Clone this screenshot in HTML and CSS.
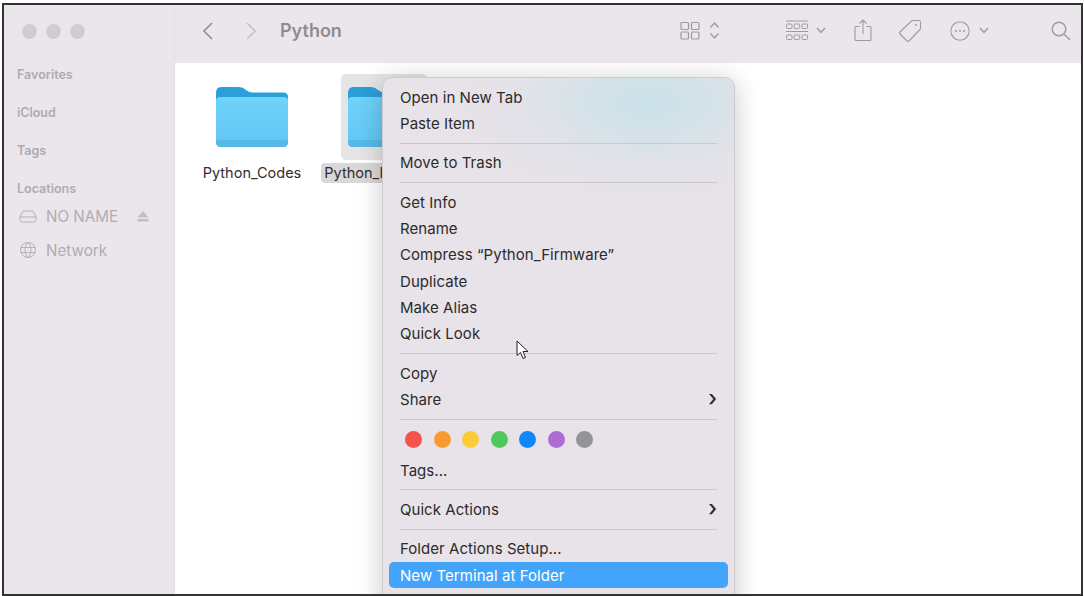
FILE: index.html
```html
<!DOCTYPE html>
<html lang="en">
  <head>
    <meta charset="UTF-8" />
    <meta name="viewport" content="width=device-width, initial-scale=1.0" />
    <title>Python</title>
    <link rel="stylesheet" href="styles.css">
  </head>
  <body>
    <div class="window">
      <aside class="sidebar">
        <div class="lights"><i></i><i></i><i></i></div>
        <div class="side-title">Favorites</div>
        <div class="side-title">iCloud</div>
        <div class="side-title">Tags</div>
        <div class="side-title">Locations</div>
        <div class="side-item">
          <svg width="18" height="14" viewBox="0 0 18 14" fill="none" stroke="#b5b1b6" stroke-width="1">
            <path d="M1 8 L4 2 H14 L17 8 V11 Q17 13 15 13 H3 Q1 13 1 11 Z M1 8 H17" />
          </svg>
          <span>NO NAME</span>
          <svg class="eject" width="12" height="11" viewBox="0 0 12 11" fill="#c2bec3">
            <path d="M6 0 L11.5 6.5 H0.5 Z M0.5 8 H11.5 V10.5 H0.5 Z" />
          </svg>
        </div>
        <div class="side-item net">
          <svg width="18" height="18" viewBox="0 0 18 18" fill="none" stroke="#b5b1b6" stroke-width="1">
            <circle cx="9" cy="9" r="7.5" />
            <path d="M9 1.5 C5 5 5 13 9 16.5 C13 13 13 5 9 1.5 M2 6.5 H16 M2 11.5 H16" />
          </svg>
          <span>Network</span>
        </div>
      </aside>

      <div class="main">
        <header class="toolbar">
          <svg class="back" width="12" height="20" viewBox="0 0 12 20" fill="none" stroke="#8f8c91" stroke-width="1.6">
            <path d="M10 2 L2 10 L10 18" />
          </svg>
          <svg class="forward" width="12" height="20" viewBox="0 0 12 20" fill="none" stroke="#c4c1c6" stroke-width="1.6">
            <path d="M2 2 L10 10 L2 18" />
          </svg>
          <div class="folder-title">Python</div>

          <svg class="ic-grid" width="20" height="19" viewBox="0 0 20 19" fill="none" stroke="#9e9b9f" stroke-width="1.2">
            <rect x="1" y="1.5" width="7.5" height="7" rx="1" />
            <rect x="11.5" y="1.5" width="7.5" height="7" rx="1" />
            <rect x="1" y="11" width="7.5" height="7" rx="1" />
            <rect x="11.5" y="11" width="7.5" height="7" rx="1" />
          </svg>
          <svg class="ic-updown" width="11" height="19" viewBox="0 0 11 19" fill="none" stroke="#9e9b9f" stroke-width="1.4">
            <path d="M1.5 6.5 L5.5 2 L9.5 6.5 M1.5 12.5 L5.5 17 L9.5 12.5" />
          </svg>
          <svg class="ic-group" width="22" height="22" viewBox="0 0 22 22" fill="none" stroke="#9e9b9f" stroke-width="1">
            <path d="M0 1 H22 M0 11.5 H22" />
            <rect x="0.5" y="4" width="5.5" height="4.5" rx="1" />
            <rect x="8.2" y="4" width="5.5" height="4.5" rx="1" />
            <rect x="16" y="4" width="5.5" height="4.5" rx="1" />
            <rect x="0.5" y="15" width="5.5" height="4.5" rx="1" />
            <rect x="8.2" y="15" width="5.5" height="4.5" rx="1" />
            <rect x="16" y="15" width="5.5" height="4.5" rx="1" />
          </svg>
          <svg class="ic-chev c1" width="10" height="7" viewBox="0 0 10 7" fill="none" stroke="#9e9b9f" stroke-width="1.4">
            <path d="M1 1 L5 5.5 L9 1" />
          </svg>
          <svg class="ic-share" width="18" height="23" viewBox="0 0 18 23" fill="none" stroke="#9e9b9f" stroke-width="1.1">
            <path d="M5.5 7.5 H2 Q1 7.5 1 8.5 V20.5 Q1 21.5 2 21.5 H16 Q17 21.5 17 20.5 V8.5 Q17 7.5 16 7.5 H12.5 M9 15 V1.5 M5.5 4.5 L9 1 L12.5 4.5" />
          </svg>
          <svg class="ic-tag" width="24" height="24" viewBox="0 0 24 24" fill="none" stroke="#9e9b9f" stroke-width="1.1">
            <path d="M14 1.5 H21 Q22.5 1.5 22.5 3 V10 L11 22 Q10 23 9 22 L2 15 Q1 14 2 13 Z" />
            <circle cx="18" cy="6" r="1" fill="#9e9b9f" stroke="none" />
          </svg>
          <svg class="ic-more" width="20" height="20" viewBox="0 0 20 20" fill="none" stroke="#9e9b9f" stroke-width="1.1">
            <circle cx="10" cy="10" r="9.2" />
            <circle cx="6" cy="10" r="1" fill="#9e9b9f" stroke="none" />
            <circle cx="10" cy="10" r="1" fill="#9e9b9f" stroke="none" />
            <circle cx="14" cy="10" r="1" fill="#9e9b9f" stroke="none" />
          </svg>
          <svg class="ic-chev c2" width="10" height="7" viewBox="0 0 10 7" fill="none" stroke="#9e9b9f" stroke-width="1.4">
            <path d="M1 1 L5 5.5 L9 1" />
          </svg>
          <svg class="ic-search" width="20" height="20" viewBox="0 0 20 20" fill="none" stroke="#9e9b9f" stroke-width="1.4">
            <circle cx="8" cy="8" r="6.8" />
            <path d="M13 13 L19 19" />
          </svg>
        </header>

        <section class="files">
          <div class="file">
            <div class="thumb">
              <svg width="72" height="62" viewBox="0 0 72 62">
                <use href="#folder" />
              </svg>
            </div>
            <div class="file-name">Python_Codes</div>
          </div>
          <div class="file selected">
            <div class="thumb">
              <svg width="72" height="62" viewBox="0 0 72 62">
                <use href="#folder" />
              </svg>
            </div>
            <div class="file-name">Python_Firmware</div>
          </div>
        </section>
      </div>

      <div class="menu">
        <div class="row">Open in New Tab</div>
        <div class="row">Paste Item</div>
        <hr />
        <div class="row">Move to Trash</div>
        <hr />
        <div class="row">Get Info</div>
        <div class="row">Rename</div>
        <div class="row">Compress “Python_Firmware”</div>
        <div class="row">Duplicate</div>
        <div class="row">Make Alias</div>
        <div class="row">Quick Look</div>
        <hr />
        <div class="row">Copy</div>
        <div class="row">Share<span class="arrow">›</span></div>
        <hr />
        <div class="dots">
          <i class="red"></i><i class="orange"></i><i class="yellow"></i><i class="green"></i><i class="blue"></i><i class="purple"></i><i class="gray"></i>
        </div>
        <div class="row">Tags...</div>
        <hr />
        <div class="row">Quick Actions<span class="arrow">›</span></div>
        <hr />
        <div class="row">Folder Actions Setup...</div>
        <div class="row active">New Terminal at Folder</div>
      </div>

      <svg class="cursor" width="14" height="20" viewBox="0 0 14 20">
        <path d="M1 1 V15.5 L4.5 12.5 L7 18.5 L9.5 17.5 L7 11.5 H12 Z" fill="#fff" stroke="#222" stroke-width="1" />
      </svg>
    </div>

    <svg width="0" height="0" class="defs">
      <defs>
        <linearGradient id="front" x1="0" y1="0" x2="0" y2="1">
          <stop offset="0" stop-color="#6fd3fb" />
          <stop offset="1" stop-color="#62c6f5" />
        </linearGradient>
        <g id="folder">
          <path d="M0 7 Q0 1 5 1 H23 Q27 1 30 4 Q33 6.5 37 6.5 H67 Q72 6.5 72 11 V30 H0 Z" fill="#2a9fd9" />
          <path d="M0 15 Q0 11 4 11 H68 Q72 11 72 15 V56 Q72 61 67 61 H5 Q0 61 0 56 Z" fill="url(#front)" />
          <path d="M0 54 H72 V56 Q72 61 67 61 H5 Q0 61 0 56 Z" fill="#58b9e8" />
        </g>
      </defs>
    </svg>
  </body>
</html>
```

FILE: styles.css
```css
* {
  box-sizing: border-box;
}
html,
body {
  margin: 0;
  height: 596px;
  background: #fff;
  overflow: hidden;
}
body {
  padding: 3px 1px 0 2px;
  font-family: Inter, "Liberation Sans", sans-serif;
}
.window {
  position: relative;
  display: flex;
  height: 593px;
  border: 2px solid #333;
  overflow: hidden;
}
.defs {
  position: absolute;
}

.sidebar {
  width: 171px;
  flex: none;
  background: #ebe6eb;
  border-right: 1px solid #e3dee4;
  color: #aeaaaf;
}
.lights {
  display: flex;
  gap: 9px;
  padding: 19px 0 0 18px;
  height: 54px;
}
.lights i {
  width: 15px;
  height: 15px;
  border-radius: 50%;
  background: #d0ccd1;
}
.side-title {
  height: 38px;
  line-height: 32px;
  padding-left: 13px;
  font-size: 12.5px;
  font-weight: 600;
}
.side-item {
  display: flex;
  align-items: center;
  gap: 9px;
  height: 28px;
  margin-top: -9px;
  margin-bottom: 15px;
  padding-left: 15px;
  font-size: 15.2px;
  color: #b0acb1;
}
.eject {
  margin-left: 10px;
}

.main {
  flex: 1;
  min-width: 0;
  display: flex;
  flex-direction: column;
}
.toolbar {
  height: 58px;
  flex: none;
  display: flex;
  align-items: center;
  padding-bottom: 7px;
  background: #ebe6eb;
}
.back {
  margin-left: 27px;
}
.forward {
  margin-left: 31px;
}
.folder-title {
  margin-left: 23px;
  width: 400px;
  font-size: 18px;
  font-weight: 600;
  color: #8f8c91;
}
.ic-updown {
  margin-left: 9px;
}
.ic-group {
  margin-left: 66px;
}
.ic-chev.c1 {
  margin-left: 8px;
}
.ic-share {
  margin-left: 28px;
}
.ic-tag {
  margin-left: 26px;
}
.ic-more {
  margin-left: 28px;
}
.ic-chev.c2 {
  margin-left: 9px;
}
.ic-search {
  margin-left: 62px;
}

.files {
  flex: 1;
  display: flex;
  background: #fff;
  padding: 11px 0 0 28px;
}
.file {
  width: 98px;
  display: flex;
  flex-direction: column;
  align-items: center;
}
.file + .file {
  margin-left: 34px;
}
.thumb {
  width: 86px;
  height: 86px;
  display: flex;
  align-items: center;
  justify-content: center;
  border-radius: 5px;
}
.file-name {
  margin-top: 3px;
  height: 20px;
  padding: 0 3px;
  line-height: 20px;
  font-size: 14.5px;
  white-space: nowrap;
  color: #2f2d30;
  border-radius: 4px;
}
.selected .thumb {
  background: #e6e5e6;
}
.selected .file-name {
  background: #d9d8d9;
}

/* menu sits over the window, runs off the bottom edge */
.menu {
  position: absolute;
  left: 378px;
  top: 72px;
  width: 353px;
  height: 540px;
  padding: 6px 6px;
  border-radius: 10px;
  border: 1px solid #cfcccf;
  background: radial-gradient(ellipse 190px 95px at 265px 25px, #cbe1e9 0, #d3e2e8 30%, rgba(222, 226, 232, 0.6) 65%, rgba(231, 227, 232, 0) 100%), #e7e3e8;
  box-shadow: 0 4px 26px rgba(0, 0, 0, 0.22);
  font-size: 15px;
  letter-spacing: 0.05px;
  color: #2c2a2d;
}
.row {
  display: flex;
  justify-content: space-between;
  align-items: center;
  height: 26.33px;
  padding: 0 11px;
  border-radius: 5px;
}
.row.active {
  background: #42a5fb;
  color: #fff;
}
.arrow {
  font-size: 22px;
  line-height: 20px;
  font-weight: 500;
  margin-top: -3px;
}
.menu hr {
  height: 1px;
  margin: 6px 11px;
  border: 0;
  background: #cbc8cc;
}
.dots {
  display: flex;
  gap: 11.5px;
  height: 31.5px;
  padding: 5px 0 0 16px;
}
.dots i {
  width: 17px;
  height: 17px;
  border-radius: 50%;
}
.red {
  background: #f9514c;
}
.orange {
  background: #f89b34;
}
.yellow {
  background: #fccb3a;
}
.green {
  background: #50c95c;
}
.blue {
  background: #0f89f7;
}
.purple {
  background: #ab6cd4;
}
.gray {
  background: #949396;
}

.cursor {
  position: absolute;
  left: 512px;
  top: 335px;
}
```
